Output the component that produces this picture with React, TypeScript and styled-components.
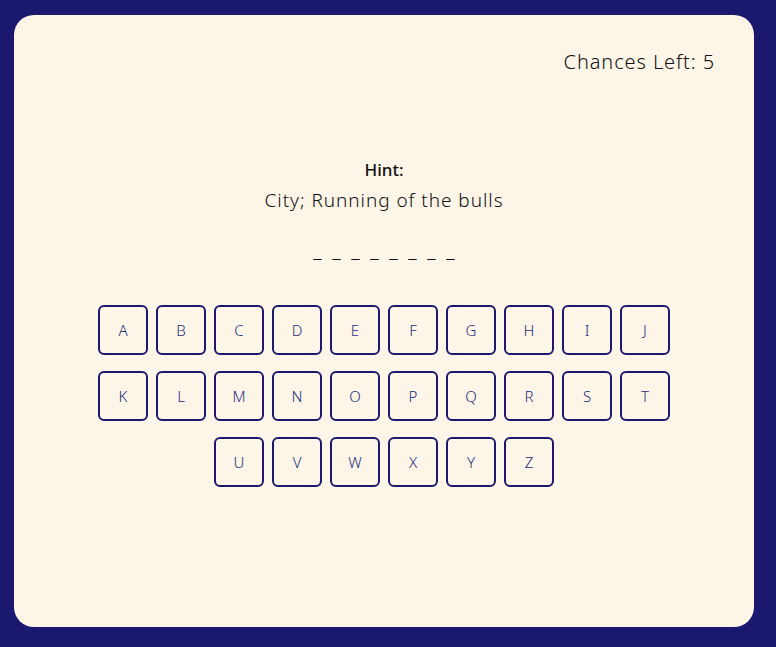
import React from "react";
import styled, { createGlobalStyle } from "styled-components";

const NAVY = "#1b196f";

const Global = createGlobalStyle`
  html, body { margin: 0; padding: 0; background: ${NAVY}; }
  body { font-family: "Noto Sans", "Liberation Sans", sans-serif; }
`;

const Page = styled.div`
  width: 776px;
  height: 647px;
  padding: 15px 22px 20px 14px;
  box-sizing: border-box;
`;

const Card = styled.div`
  width: 740px;
  height: 612px;
  background: #fdf5e7;
  border-radius: 20px;
  padding: 32px 40px 0 40px;
  box-sizing: border-box;
  display: flex;
  flex-direction: column;
  align-items: center;
  color: #111;
`;

const Header = styled.div`
  align-self: stretch;
  display: flex;
  justify-content: flex-end;
  font-size: 20px;
  font-weight: 300;
  line-height: 30px;
  letter-spacing: 0.9px;
  margin-right: -1px;
  color: #111;
`;

const HintLabel = styled.div`
  margin-top: 79px;
  font-size: 17px;
  font-weight: 500;
  line-height: 28px;
`;

const HintText = styled.div`
  margin-top: 2px;
  font-size: 19px;
  font-weight: 300;
  line-height: 28px;
  letter-spacing: 0.95px;
`;

const Blanks = styled.div`
  margin-top: 21px;
  display: flex;
  gap: 9px;
  height: 30px;
`;

const Blank = styled.span`
  width: 10px;
  overflow: hidden;
  display: flex;
  justify-content: center;
  font-size: 20px;
  line-height: 30px;
  font-weight: 300;
`;

const Keys = styled.div`
  margin-top: 40px;
  width: 572px;
  display: flex;
  flex-wrap: wrap;
  justify-content: center;
  column-gap: 8px;
  row-gap: 16px;
`;

const Key = styled.button`
  width: 50px;
  height: 50px;
  box-sizing: border-box;
  border: 2px solid ${NAVY};
  border-radius: 6px;
  background: transparent;
  color: #22307a;
  font-family: "Noto Sans", "Liberation Sans", sans-serif;
  font-weight: 300;
  font-size: 15px;
  padding: 0;
  display: flex;
  align-items: center;
  justify-content: center;
  cursor: pointer;
`;

const letters = "ABCDEFGHIJKLMNOPQRSTUVWXYZ".split("");

export default function App() {
  return (
    <Page>
      <Global />
      <Card>
        <Header>Chances Left: 5</Header>
        <HintLabel>Hint:</HintLabel>
        <HintText>City; Running of the bulls</HintText>
        <Blanks>
          {Array.from({ length: 8 }).map((_, i) => (
            <Blank key={i}>_</Blank>
          ))}
        </Blanks>
        <Keys>
          {letters.map((l) => (
            <Key key={l}>{l}</Key>
          ))}
        </Keys>
      </Card>
    </Page>
  );
}
